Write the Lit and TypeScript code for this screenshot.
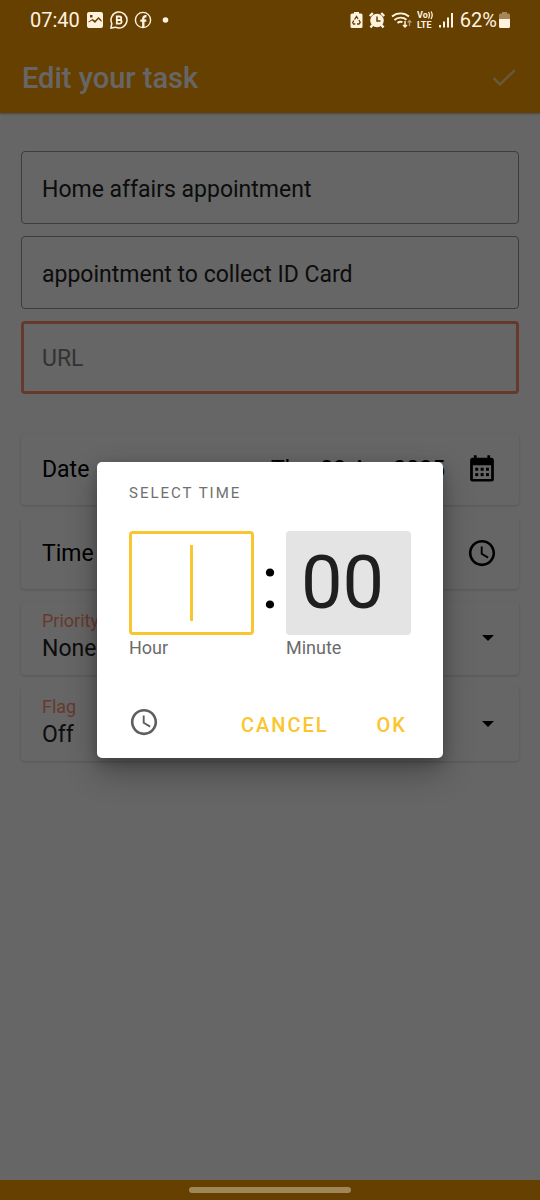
import { LitElement, html, css, svg } from "lit";
import { customElement, state } from "lit/decorators.js";

const clock = html`<svg class="icon" viewBox="0 0 24 24" aria-hidden="true">
  <path fill="currentColor" d="M11.99 1.500C6.200 1.500 1.500 6.200 1.500 12s4.700 10.500 10.490 10.500C17.800 22.500 22.500 17.800 22.500 12S17.800 1.500 11.990 1.500zM12 20.400c-4.640 0-8.400-3.760-8.400-8.400s3.760-8.400 8.400-8.400 8.400 3.760 8.400 8.400-3.760 8.400-8.400 8.400zm.5-13.650H11v6.300l5.500 3.300.8-1.300-4.800-2.800z"/></svg>`;

const calendar = html`<svg class="icon" viewBox="0 0 24 24" aria-hidden="true">
  <path fill="currentColor" fill-rule="evenodd" d="M5.500 1h2.200V3h8.600V1h2.200V3h1a2 2 0 0 1 2 2V20a2 2 0 0 1-2 2H4.500a2 2 0 0 1-2-2V5a2 2 0 0 1 2-2h1zM4.700 9V20h14.600V9z"/>
  ${[6.6, 10.9, 15.2].map((x) => [11, 15.3].map((y) => svg`<rect x=${x} y=${y} width="2.400" height="2.400" fill="currentColor"/>`))}</svg>`;

const arrow = html`<svg class="arrow" viewBox="0 0 12 6" aria-hidden="true"><path fill="currentColor" d="M0 0h12L6 6z"/></svg>`;

@customElement("app-root")
export class AppRoot extends LitElement {
  static styles = css`
    :host {
      display: flex;
      flex-direction: column;
      position: relative;
      min-height: 100vh;
      background: #fff;
      color: #000;
      font-family: Roboto, sans-serif;
      font-size: 23px;
      line-height: 28px;
    }
    * { box-sizing: border-box; }
    svg { display: block; flex: none; }
    button, input, select {
      font: inherit;
      color: inherit;
      margin: 0;
      padding: 0;
      border: 0;
      border-radius: 4px;
      background: none;
      outline: none;
      appearance: none;
      min-width: 0;
    }
    button { cursor: pointer; }
    .header { background: #ffa000; box-shadow: 0 1px 2px rgba(0, 0, 0, 0.3); }
    .status {
      position: relative;
      z-index: 2;
      display: flex;
      align-items: center;
      justify-content: space-between;
      height: 40px;
      padding: 0 30px;
      color: #fff3e0;
      font-size: 20px;
      line-height: 24px;
    }
    .group { display: flex; align-items: center; gap: 6px; }
    .system { gap: 5px; }
    .battery { display: flex; align-items: center; gap: 2px; margin-left: 1px; }
    .appbar {
      display: flex;
      align-items: center;
      justify-content: space-between;
      height: 73px;
      padding: 2px 24px 0 22px;
      color: #fff;
    }
    h1 { margin: 0; font-size: 29px; line-height: 36px; font-weight: 500; }
    .done { display: grid; opacity: 0.6; }
    .form { flex: 1; padding: 38px 21px; }
    .fields, .cards { display: grid; gap: 12px; }
    .field {
      width: 100%;
      height: 73px;
      padding: 3px 20px 0;
      border: 1px solid #989898;
      color: #222;
    }
    .field::placeholder { color: #808080; opacity: 1; }
    .field.focused { padding: 1px 18px 0; border: 3px solid #ff9070; }
    .cards { margin-top: 39px; }
    .card {
      display: flex;
      align-items: center;
      justify-content: space-between;
      width: 100%;
      min-height: 72px;
      padding: 0 22px 0 21px;
      border-radius: 4px;
      background: #fff;
      box-shadow: 0 1px 3px rgba(0, 0, 0, 0.16);
      text-align: left;
    }
    .card span { padding-top: 2px; }
    .value { flex: 1; margin-right: 22px; text-align: right; }
    .icon { width: 30px; height: 30px; }
    .picker { min-height: 74px; padding: 0 25px 0 21px; }
    .stack { flex: 1; display: grid; padding-bottom: 3px; }
    .stack label { color: #ff9070; font-size: 18px; line-height: 24px; }
    .stack select { height: 32px; color: #222; }
    .arrow { width: 12px; height: 6px; }
    .navbar {
      display: grid;
      place-items: center;
      height: 20px;
      background: #ffa000;
    }
    .handle {
      position: relative;
      z-index: 2;
      width: 30%;
      height: 6px;
      border-radius: 3px;
      background: #a08658;
    }
    .scrim {
      position: absolute;
      inset: 0;
      z-index: 1;
      display: grid;
      place-items: center;
      padding: 40px 20px 20px;
      background: rgba(0, 0, 0, 0.6);
    }
    .dialog {
      width: 346px;
      max-width: 100%;
      padding: 19px 32px 7px;
      border-radius: 5px;
      background: #fff;
      box-shadow: 0 14px 32px rgba(0, 0, 0, 0.3), 0 4px 12px rgba(0, 0, 0, 0.2);
    }
    h2 {
      margin: 0 0 26px;
      color: #6f6f6f;
      font-size: 15px;
      font-weight: 400;
      letter-spacing: 2px;
      line-height: 24px;
    }
    .time { display: grid; grid-template-columns: 1fr 32px 1fr; }
    .unit { display: grid; position: relative; }
    .unit input {
      width: 100%;
      height: 104px;
      padding: 0 15px;
      background: #e4e4e4;
      color: #1f1f1f;
      font-size: 74px;
      line-height: 104px;
    }
    .unit .active { border: 3px solid #f9c62f; background: #fff; caret-color: transparent; }
    .caret {
      position: absolute;
      top: 14px;
      left: 50%;
      width: 3px;
      height: 76px;
      margin-left: -2px;
      background: #f9c62f;
    }
    .unit label { color: #6b6b6b; font-size: 18px; line-height: 26px; }
    .colon { font-size: 74px; line-height: 104px; text-align: center; }
    .actions { display: flex; align-items: center; margin-top: 38px; height: 52px; }
    .mode { display: grid; margin-right: auto; padding-bottom: 6px; color: #5f5f5f; }
    .text {
      margin-right: 4px;
      color: #fbc52d;
      font-size: 20px;
      font-weight: 500;
      letter-spacing: 2px;
    }
    .cancel { margin-right: 48px; }
  `;

  @state() private fields = [
    { id: "title", label: "Title", value: "Home affairs appointment", focused: false },
    { id: "description", label: "Description", value: "appointment to collect ID Card", focused: false },
    { id: "url", label: "URL", value: "", focused: true },
  ];

  private statusBar() {
    return html`<div class="status">
      <div class="group">
        <span>07:40</span>
        <svg width="18" height="18" viewBox="0 0 18 18"><path fill="currentColor" fill-rule="evenodd" d="M3 1h12a2 2 0 0 1 2 2v12a2 2 0 0 1-2 2H3a2 2 0 0 1-2-2V3a2 2 0 0 1 2-2zM2.500 11.500L6 9.500l3 2.500 3.500-4 3 3V9l-3-3L9 9.500 6.500 8l-4 2.500zM4 4v2.500h2.500V4z"/></svg>
        <svg width="18" height="18" viewBox="0 0 18 18" fill="none" stroke="currentColor" stroke-width="1.500"><path d="M1 17l.8-4.500A8 8 0 1 1 5.500 16.200z"/><path stroke-width="1.800" d="M6.800 5.500h2.700a1.700 1.700 0 0 1 0 3.500H6.800zM6.800 9h3a1.800 1.800 0 0 1 0 3.600h-3z"/></svg>
        <svg width="18" height="18" viewBox="0 0 18 18" fill="none" stroke="currentColor"><circle cx="9" cy="9" r="7.600" stroke-width="1.400"/><path stroke-width="2.400" d="M9.300 16.500V7.500q0-2.600 3.200-2.200M6.300 9.600h6"/></svg>
        <svg width="18" height="18" viewBox="0 0 18 18"><circle cx="7.500" cy="9" r="2.800" fill="currentColor"/></svg>
      </div>
      <div class="group system">
        <svg width="13" height="18" viewBox="0 0 13 18"><path fill="currentColor" d="M4 1h5v1.500h2a1.500 1.500 0 0 1 1.500 1.500v11.500a1.500 1.500 0 0 1-1.500 1.500H2A1.500 1.500 0 0 1 .5 15.500V4A1.500 1.500 0 0 1 2 2.500h2z"/><path fill="none" stroke="#664000" stroke-width="1.300" d="M4.500 8.500l2-3 1.500 2.300M9 9l1.200 2.500-1.200 1.500H7M5.300 13H3.500l-.8-1.500L3.800 9.500"/></svg>
        <svg width="18" height="18" viewBox="0 0 18 18"><circle cx="9" cy="9.500" r="6.800" fill="currentColor"/><path fill="none" stroke="currentColor" stroke-width="2.400" d="M1.800 5l3-3M16.200 5l-3-3M4.500 14l-2 2.500M13.500 14l2 2.500"/><path fill="none" stroke="#664000" stroke-width="1.500" d="M9 5.500V10h3.500"/></svg>
        <svg width="21" height="18" viewBox="0 0 21 18" fill="none" stroke="currentColor" stroke-width="1.900"><path d="M1 5.500a13 13 0 0 1 17 0M3.500 9a9 9 0 0 1 12-.2M6.500 12a5 5 0 0 1 5-.8"/><path stroke-width="1.500" d="M14 10v6M12 14l2 2 2-2"/><path stroke-width="1.300" opacity=".5" d="M18.500 15V9.500M16.700 11.500l1.800-2 1.800 2"/></svg>
        <svg width="16" height="18" viewBox="0 0 16 18" fill="currentColor" font-family="Roboto" font-weight="700"><text x="0" y="7" font-size="9">Vo</text><path fill="none" stroke="currentColor" stroke-width="1.300" d="M11.500 1q2 3 0 6.500M14 .5q2.400 3.500 0 7.500"/><text x="0" y="17" font-size="9">LTE</text></svg>
        <svg width="16" height="18" viewBox="0 0 16 18" fill="currentColor"><path d="M1 14h2v2.500H1zM5 10.500h2v6H5zM9 6.500h2v10H9zM13 2h2v14.500h-2z"/></svg>
        <span class="battery"><span>62%</span>
        <svg width="11" height="18" viewBox="0 0 11 18"><path opacity=".4" fill="currentColor" d="M3 1h5v1.500h1.500A1.500 1.500 0 0 1 11 4v4.500H0V4a1.500 1.500 0 0 1 1.500-1.500H3z"/><path fill="currentColor" d="M0 8h11v7.500A1.500 1.500 0 0 1 9.500 17h-8A1.500 1.500 0 0 1 0 15.500z"/></svg></span>
      </div>
    </div>`;
  }

  private picker(id: string, label: string, value: string) {
    return html`<div class="card picker">
      <div class="stack">
        <label for=${id}>${label}</label>
        <select id=${id}><option>${value}</option></select>
      </div>
      ${arrow}
    </div>`;
  }

  render() {
    return html`
      <header class="header">
        ${this.statusBar()}
        <div class="appbar">
          <h1>Edit your task</h1>
          <button class="done" aria-label="Save">
            <svg width="24" height="24" viewBox="0 0 24 24"><path fill="none" stroke="currentColor" stroke-width="2.500" d="M1.500 12l6.500 6.500L23 4"/></svg>
          </button>
        </div>
      </header>
      <main class="form">
        <div class="fields">
          ${this.fields.map((f) => html`<input id=${f.id} class="field ${f.focused ? "focused" : ""}" type="text"
            aria-label=${f.label} placeholder=${f.label} .value=${f.value}>`)}
        </div>
        <div class="cards">
          <button class="card"><span>Date</span><span class="value">Thu, 03 Apr 2025</span>${calendar}</button>
          <button class="card"><span>Time</span>${clock}</button>
          ${this.picker("priority", "Priority", "None")}
          ${this.picker("flag", "Flag", "Off")}
        </div>
      </main>
      <footer class="navbar"><div class="handle"></div></footer>
      <div class="scrim">
        <section class="dialog" role="dialog" aria-labelledby="heading">
          <h2 id="heading">SELECT TIME</h2>
          <div class="time">
            <div class="unit">
              <input id="hour" class="active" type="text" inputmode="numeric">
              <span class="caret"></span>
              <label for="hour">Hour</label>
            </div>
            <span class="colon">:</span>
            <div class="unit">
              <input id="minute" type="text" inputmode="numeric" .value=${"00"}>
              <label for="minute">Minute</label>
            </div>
          </div>
          <div class="actions">
            <button class="mode" aria-label="Clock face">${clock}</button>
            <button class="text cancel">CANCEL</button>
            <button class="text">OK</button>
          </div>
        </section>
      </div>
    `;
  }
}
